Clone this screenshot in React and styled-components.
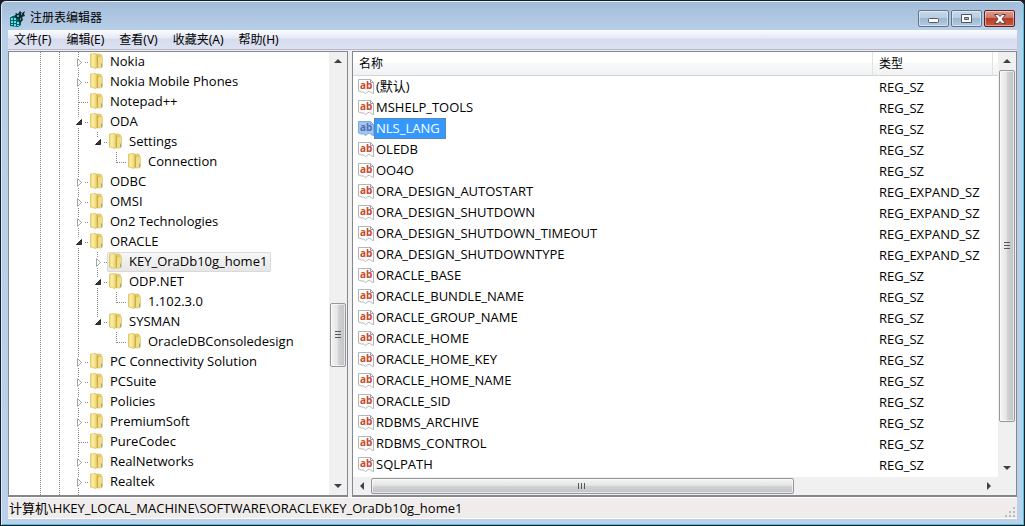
import React from "react";
import styled, { createGlobalStyle, css } from "styled-components";

const GlobalStyle = createGlobalStyle`
  * { box-sizing: border-box; }
  body {
    margin: 0;
    background: #1a1d24;
    color: #000;
    font: 12px/20px "Noto Sans", "Noto Sans CJK SC", sans-serif;
  }
  button {
    font: inherit;
    color: inherit;
    padding: 0;
    border: 0;
    background: none;
  }
`;

const dataFont = css`
  font-family: "Open Sans", "Noto Sans CJK SC", sans-serif;
  font-size: 13px;
`;

const Window = styled.div`
  display: flex;
  flex-direction: column;
  height: 100vh;
  min-height: 320px;
  padding: 0 7px 6px 7px;
  border: 1px solid #14202b;
  border-bottom-color: #0b1a20;
  border-radius: 6px 6px 0 0;
  background: linear-gradient(#a2bcd9 0, #b8cfe8 30px, #b9d1ea 100%);
  box-shadow: inset 0 1px #e4eef8, inset 1px 0 #dfeaf6, inset -1px -1px #45c3dc;
`;

const TitleBar = styled.header`
  display: flex;
  flex: none;
  align-items: center;
  height: 29px;
  padding: 5px 2px 0 1px;
`;

const Title = styled.h1`
  flex: 1;
  margin: 0 0 0 4px;
  font-size: 12px;
  font-weight: 400;
`;

const CaptionButtons = styled.div`
  display: flex;
  align-self: flex-start;
  gap: 2px;
  padding-top: 4px;
`;

const CaptionButton = styled.button`
  display: grid;
  place-items: center;
  width: 31px;
  height: 17px;
  border: 1px solid ${(p) => (p.$danger ? "#5c1f22" : "#61738a")};
  border-radius: 2px;
  box-shadow: inset 0 0 0 1px rgba(255, 255, 255, 0.45);
  background: ${(p) =>
    p.$danger
      ? "linear-gradient(#dd9c8f 0, #cf7766 45%, #b93c25 50%, #c8573e 100%)"
      : "linear-gradient(#c6d8ea 0, #b9cde2 45%, #9db7d1 50%, #b4cbe2 100%)"};
`;

const MenuBar = styled.nav`
  display: flex;
  flex: none;
  gap: 15px;
  height: 20px;
  padding-left: 6px;
  border-bottom: 1px solid #b3b7c4;
  background: linear-gradient(#fbfcfe 0, #e6eaf6 40%, #d6dcee 50%, #dde2f2 100%);
`;

const MenuItem = styled.button`
  line-height: 19px;
`;

const Panes = styled.main`
  display: flex;
  flex: 1;
  min-height: 0;
  gap: 4px;
  padding-top: 1px;
  background: #f0f0f0;
`;

const pane = css`
  min-height: 0;
  overflow: hidden;
  border: 1px solid #828790;
  border-bottom-width: 2px;
  background: #fff;
`;

const TreePane = styled.section`
  ${pane}
  display: flex;
  flex: none;
  width: 340px;
`;

const Tree = styled.ul`
  flex: 1;
  margin: 0;
  padding: 0 0 0 22px;
  overflow: hidden;
  list-style: none;
`;

const TreeRow = styled.li`
  display: flex;
  height: 20px;
`;

const NodeLabel = styled.span`
  ${dataFont}
  display: flex;
  align-items: center;
  gap: 5px;
  padding: 0 4px 2px 1px;
  line-height: 18px;
  white-space: nowrap;
  border-radius: 2px;
  ${(p) =>
    p.$selected &&
    css`
      background: linear-gradient(#f8f8f8, #e5e5e5);
      box-shadow: inset 0 0 0 1px #d9d9d9;
    `}
`;

const ListPane = styled.section`
  ${pane}
  display: grid;
  flex: 1;
  min-width: 0;
  grid-template-columns: minmax(0, 1fr) 18px;
  grid-template-rows: minmax(0, 1fr) 18px;
`;

const ListView = styled.div`
  overflow: hidden;
`;

const Table = styled.table`
  width: 100%;
  table-layout: fixed;
  border-collapse: separate;
  border-spacing: 0;
`;

const NameCol = styled.col``;
const TypeCol = styled.col`
  width: 120px;
`;
const DataCol = styled.col`
  width: 5px;
`;

const HeadCell = styled.th`
  height: 24px;
  padding: 0 0 0 6px;
  font-weight: 400;
  line-height: 22px;
  text-align: left;
  border-right: 1px solid #dfe2e6;
  border-bottom: 1px solid #d5d5d5;
  background: linear-gradient(#fff 0, #fff 45%, #f7f8fa 50%, #f1f2f4 100%);
  &:last-child {
    padding: 0;
    border-right: 0;
  }
`;

const Cell = styled.td`
  ${dataFont}
  height: 21px;
  padding: 0 0 0 6px;
  line-height: 20px;
  white-space: nowrap;
`;

const NameCell = styled(Cell)`
  padding-left: 5px;
`;

const ValueName = styled.div`
  display: flex;
  align-items: center;
  height: 21px;
`;

const ValueText = styled.span`
  padding: 0 5px 0 1px;
  line-height: 19px;
  border: 1px solid transparent;
  margin-left: -1px;
  ${(p) =>
    p.$selected &&
    css`
      color: #fff;
      background: #3399ff;
      border-color: #5c86b5;
    `}
`;

const Bar = styled.div`
  display: flex;
  flex: none;
  flex-direction: ${(p) => (p.$horizontal ? "row" : "column")};
  ${(p) => (p.$horizontal ? "height: 18px;" : "width: 18px;")}
  padding: ${(p) => (p.$horizontal ? "1px 0" : "0 1px")};
  background: #f0f0f0;
`;

const BarButton = styled.button`
  display: grid;
  flex: none;
  place-items: center;
  ${(p) => (p.$horizontal ? "width: 18px; height: 16px;" : "width: 16px; height: 18px;")}
`;

const Track = styled.div`
  flex: ${(p) => p.$grow} 1 0;
`;

const Thumb = styled.div`
  display: grid;
  place-items: center;
  flex: ${(p) => p.$grow} 1 0;
  border: 1px solid #979797;
  border-radius: 2px;
  box-shadow: inset 0 0 0 1px rgba(255, 255, 255, 0.6);
  background: linear-gradient(
    ${(p) => (p.$horizontal ? "180deg" : "90deg")},
    #f4f4f4 0,
    #e6e6e7 45%,
    #cfd0d2 55%,
    #c2c3c6 100%
  );
`;

const Corner = styled.div`
  background: #f0f0f0;
`;

const StatusBar = styled.footer`
  display: flex;
  flex: none;
  align-items: center;
  justify-content: space-between;
  height: 22px;
  padding: 0 1px;
  border-top: 1px solid #fff;
  border-bottom: 1px solid #fff;
  background: #f0eceb;
`;

const StatusText = styled.span`
  ${dataFont}
`;

const Grip = styled.svg`
  align-self: flex-end;
`;

function RegeditIcon() {
  return (
    <svg width="17" height="17" viewBox="0 0 17 17" aria-hidden="true">
      <path d="M1 7l3-2 8 2v8l-3 2-8-1z" fill="#075e66" />
      <path d="M2 8h2v2H2zM5 8h2v2H5zM2 11h2v2H2zM5 11h2v2H5zM8 12h2v2H8zM2 14h2v1H2zM5 14h2v2H5zM8 15h2v1H8z" fill="#5fe3e4" />
      <path d="M5 5l2-2 2 1 2-3 2 2 3-2-1 3 1 2-3 1 1 3-3 3-1-4-3-1z" fill="#12282c" />
      <path d="M8 5h2v2H8zM12 3h1v2h-1zM11 8h1v2h-1zM6 4h1v1H6z" fill="#3cb9bd" />
      <path d="M1 7l3-2h2" stroke="#c8f6f4" fill="none" />
    </svg>
  );
}

function FolderIcon() {
  return (
    <svg width="16" height="16" viewBox="0 0 16 16" aria-hidden="true">
      <defs>
        <linearGradient id="folderFront" x1="0" x2="1">
          <stop offset="0" stopColor="#eed36e" />
          <stop offset=".35" stopColor="#fbefa6" />
          <stop offset="1" stopColor="#e9cf68" />
        </linearGradient>
      </defs>
      <path d="M7 1h4.500l1 1v12.500H7z" fill="#e6cb67" stroke="#d6bb5c" strokeWidth=".5" />
      <path d="M8.500 4.500l4-1.500 1 1v10l-1.500 1h-4z" fill="#f1dd85" stroke="#d1b454" strokeWidth=".5" />
      <path d="M1.500 1l5-.5 1.500 1.500v12.500l-1 1-5.500-1.500z" fill="url(#folderFront)" stroke="#d2b44f" strokeWidth=".6" />
      <path d="M12.500 10.500v3.500" stroke="#8fa9a0" />
      <path d="M8.500 2.500v12" stroke="#c5a443" strokeWidth=".8" />
    </svg>
  );
}

function StringIcon({ selected }) {
  return (
    <svg width="17" height="17" viewBox="0 0 17 17" aria-hidden="true">
      <path
        d="M.5 1.500h12l3 3v11l-2-.5-2-2-2 1-2 1.500-2-1.500h-2l-3-1z"
        fill={selected ? "#9bc8f8" : "#fdfdfd"}
        stroke={selected ? "#7fa9d8" : "#b5b5b8"}
      />
      <path d="M12.500 1.500v3h3" fill="none" stroke={selected ? "#7fa9d8" : "#9c9ca0"} />
      <text
        x="2"
        y="11"
        fontFamily="Open Sans, sans-serif"
        fontSize="10"
        fontWeight="700"
        fill={selected ? "#5a6ba8" : "#c8472b"}
      >
        ab
      </text>
    </svg>
  );
}

/* One 19px step of the tree's indent: dotted guides and the expander. */
function Guide({ kind }) {
  const arrow = kind === "closed" || kind === "open" || kind === "openLast";
  const vertical = {
    line: "M9.500 0v20",
    leaf: "M9.500 0v20",
    corner: "M9.500 0v11",
    closed: "M9.500 0v5M9.500 16v4",
    open: "M9.500 0v5M9.500 16v4",
    openLast: "M9.500 0v5",
  }[kind];
  return (
    <svg width="19" height="20" viewBox="0 0 19 20" aria-hidden="true">
      {vertical && <path d={vertical} stroke="#858585" strokeDasharray="1 1" />}
      {(kind === "leaf" || kind === "corner") && (
        <path d="M10 10.500h9" stroke="#858585" strokeDasharray="1 1" />
      )}
      {arrow && <path d="M16 10.500h3" stroke="#858585" strokeDasharray="1 1" />}
      {kind === "closed" && <path d="M8.500 6.500v8l4-4z" fill="#fff" stroke="#a2a2a2" />}
      {(kind === "open" || kind === "openLast") && (
        <path d="M12.500 7.500v5h-5z" fill="#3c3c3c" stroke="#262626" />
      )}
    </svg>
  );
}

const ARROWS = {
  up: "M0 4l4-4 4 4z",
  down: "M0 0h8l-4 4z",
  left: "M4 0v8l-4-4z",
  right: "M0 0l4 4-4 4z",
};

function Arrow({ to }) {
  const flat = to === "up" || to === "down";
  return (
    <svg width={flat ? 8 : 4} height={flat ? 4 : 8} aria-hidden="true">
      <path d={ARROWS[to]} fill="#404040" />
    </svg>
  );
}

function ScrollBar({ horizontal, before, size, after }) {
  return (
    <Bar $horizontal={horizontal}>
      <BarButton $horizontal={horizontal} aria-label={horizontal ? "向左滚动" : "向上滚动"}>
        <Arrow to={horizontal ? "left" : "up"} />
      </BarButton>
      <Track $grow={before} />
      <Thumb $horizontal={horizontal} $grow={size}>
        <svg width="8" height="8" aria-hidden="true">
          <path
            d={horizontal ? "M.5 1v6M3.500 1v6M6.500 1v6" : "M1 .5h6M1 3.500h6M1 6.500h6"}
            stroke="#55575c"
          />
        </svg>
      </Thumb>
      <Track $grow={after} />
      <BarButton $horizontal={horizontal} aria-label={horizontal ? "向右滚动" : "向下滚动"}>
        <Arrow to={horizontal ? "right" : "down"} />
      </BarButton>
    </Bar>
  );
}

const MENUS = ["文件(F)", "编辑(E)", "查看(V)", "收藏夹(A)", "帮助(H)"];

const NODES = [
  ["Nokia", "closed"],
  ["Nokia Mobile Phones", "closed"],
  ["Notepad++", "leaf"],
  ["ODA", "open"],
  ["Settings", "line", "openLast"],
  ["Connection", "line", "blank", "corner"],
  ["ODBC", "closed"],
  ["OMSI", "closed"],
  ["On2 Technologies", "closed"],
  ["ORACLE", "open"],
  ["KEY_OraDb10g_home1", "line", "closed"],
  ["ODP.NET", "line", "open"],
  ["1.102.3.0", "line", "line", "corner"],
  ["SYSMAN", "line", "openLast"],
  ["OracleDBConsoledesign", "line", "blank", "corner"],
  ["PC Connectivity Solution", "closed"],
  ["PCSuite", "closed"],
  ["Policies", "closed"],
  ["PremiumSoft", "closed"],
  ["PureCodec", "leaf"],
  ["RealNetworks", "closed"],
  ["Realtek", "closed"],
  ["", "line"],
];

const VALUES = [
  ["(默认)", "REG_SZ"],
  ["MSHELP_TOOLS", "REG_SZ"],
  ["NLS_LANG", "REG_SZ"],
  ["OLEDB", "REG_SZ"],
  ["OO4O", "REG_SZ"],
  ["ORA_DESIGN_AUTOSTART", "REG_EXPAND_SZ"],
  ["ORA_DESIGN_SHUTDOWN", "REG_EXPAND_SZ"],
  ["ORA_DESIGN_SHUTDOWN_TIMEOUT", "REG_EXPAND_SZ"],
  ["ORA_DESIGN_SHUTDOWNTYPE", "REG_EXPAND_SZ"],
  ["ORACLE_BASE", "REG_SZ"],
  ["ORACLE_BUNDLE_NAME", "REG_SZ"],
  ["ORACLE_GROUP_NAME", "REG_SZ"],
  ["ORACLE_HOME", "REG_SZ"],
  ["ORACLE_HOME_KEY", "REG_SZ"],
  ["ORACLE_HOME_NAME", "REG_SZ"],
  ["ORACLE_SID", "REG_SZ"],
  ["RDBMS_ARCHIVE", "REG_SZ"],
  ["RDBMS_CONTROL", "REG_SZ"],
  ["SQLPATH", "REG_SZ"],
];

export default function App() {
  return (
    <>
      <GlobalStyle />
      <Window>
        <TitleBar>
          <RegeditIcon />
          <Title>注册表编辑器</Title>
          <CaptionButtons>
            <CaptionButton aria-label="最小化">
              <svg width="13" height="9" aria-hidden="true">
                <rect x="1.500" y="4.500" width="10" height="4" rx="1" fill="#fff" stroke="#4c5767" />
              </svg>
            </CaptionButton>
            <CaptionButton aria-label="最大化">
              <svg width="11" height="9" aria-hidden="true">
                <path d="M.5.5h10v8H.5zM3.500 3.500v2h4v-2z" fill="#fff" fillRule="evenodd" stroke="#4c5767" />
              </svg>
            </CaptionButton>
            <CaptionButton $danger aria-label="关闭">
              <svg width="12" height="10" aria-hidden="true">
                <path d="M.5.5h3.500l2 2 2-2h3.500L8 5l3.500 4.500H8l-2-2-2 2H.5L4 5z" fill="#fff" stroke="#58434a" />
              </svg>
            </CaptionButton>
          </CaptionButtons>
        </TitleBar>
        <MenuBar>
          {MENUS.map((name) => (
            <MenuItem key={name}>{name}</MenuItem>
          ))}
        </MenuBar>
        <Panes>
          <TreePane>
            <Tree>
              {NODES.map(([name, ...guides]) => (
                <TreeRow key={name}>
                  <Guide kind="line" />
                  <Guide kind="line" />
                  {guides.map((kind, i) => (
                    <Guide key={i} kind={kind} />
                  ))}
                  {name && (
                    <NodeLabel $selected={name === "KEY_OraDb10g_home1"}>
                      <FolderIcon />
                      {name}
                    </NodeLabel>
                  )}
                </TreeRow>
              ))}
            </Tree>
            <ScrollBar before={234} size={62} after={111} />
          </TreePane>
          <ListPane>
            <ListView>
              <Table>
                <colgroup>
                  <NameCol />
                  <TypeCol />
                  <DataCol />
                </colgroup>
                <thead>
                  <tr>
                    <HeadCell>名称</HeadCell>
                    <HeadCell>类型</HeadCell>
                    <HeadCell />
                  </tr>
                </thead>
                <tbody>
                  {VALUES.map(([name, type]) => (
                    <tr key={name}>
                      <NameCell>
                        <ValueName>
                          <StringIcon selected={name === "NLS_LANG"} />
                          <ValueText $selected={name === "NLS_LANG"}>{name}</ValueText>
                        </ValueName>
                      </NameCell>
                      <Cell>{type}</Cell>
                    </tr>
                  ))}
                </tbody>
              </Table>
            </ListView>
            <ScrollBar before={0} size={352} after={37} />
            <ScrollBar horizontal before={0} size={422} after={187} />
            <Corner />
          </ListPane>
        </Panes>
        <StatusBar>
          <StatusText>计算机\HKEY_LOCAL_MACHINE\SOFTWARE\ORACLE\KEY_OraDb10g_home1</StatusText>
          <Grip width="11" height="11" aria-hidden="true">
            <path d="M8 0h2v2H8zM8 4h2v2H8zM4 4h2v2H4zM8 8h2v2H8zM4 8h2v2H4zM0 8h2v2H0z" fill="#bdbcbf" />
          </Grip>
        </StatusBar>
      </Window>
    </>
  );
}
